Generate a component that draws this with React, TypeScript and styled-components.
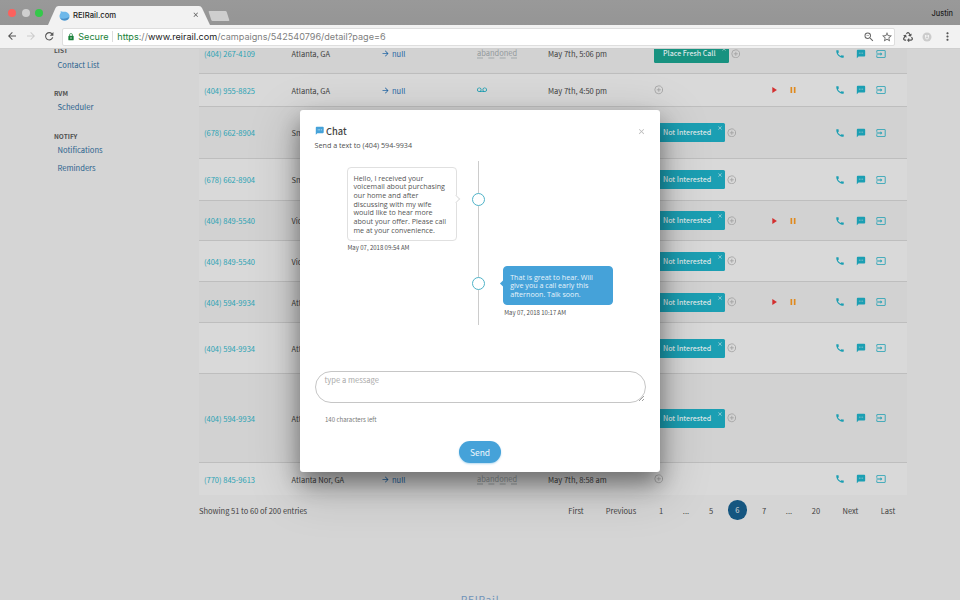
import React from "react";
import styled, { createGlobalStyle, css } from "styled-components";
import {
  MdCall, MdTextsms, MdInput, MdVoicemail, MdPlayArrow, MdPause, MdArrowForward,
  MdArrowBack, MdRefresh, MdLock, MdZoomOut, MdStarBorder, MdMoreVert, MdClose,
} from "react-icons/md";
import { FiPlusCircle } from "react-icons/fi";
import { FaRecycle } from "react-icons/fa";

const Global = createGlobalStyle`
  * { box-sizing: border-box; }
  body { margin: 0; overflow: hidden; }
  svg { display: block; flex: none; }
`;

const source = `"Noto Sans CJK SC", "Open Sans", sans-serif`;
const system = `Inter, Roboto, sans-serif`;

const Window = styled.div`
  position: relative;
  display: flex;
  flex-direction: column;
  width: 960px;
  height: 600px;
  overflow: hidden;
  background: #d5d5d5;
  font-family: ${source};
  font-size: 7.5px;
  line-height: 11px;
  color: #3f3f3f;
  white-space: nowrap;
`;

/* Browser chrome */
const TabBar = styled.header`
  display: flex;
  height: 25px;
  flex: none;
  padding-left: 8px;
  background: linear-gradient(#999, #959595);
  font-family: ${system};
`;
const Lights = styled.div`
  display: flex;
  gap: 5.5px;
  padding-top: 8.5px;
  width: 40px;
`;
const Light = styled.i<{ $color: string }>`
  width: 8px;
  height: 8px;
  border-radius: 50%;
  background: ${(p) => p.$color};
`;
const Tab = styled.div`
  position: relative;
  display: flex;
  align-items: center;
  width: 162px;
  height: 19px;
  margin-top: 6px;
  padding: 0 11px 1px 10.5px;
  color: #222;
  font-size: 7.7px;
  font-weight: 500;
`;
const TabShape = styled.svg`
  position: absolute;
  inset: 0;
`;
const TabTitle = styled.span`
  position: relative;
  flex: 1;
  margin-left: 3.5px;
`;
const TabIcon = styled.span`
  position: relative;
  color: #555;
  font-size: 8px;
`;
const NewTab = styled.div`
  width: 18px;
  height: 10px;
  margin: 11px 0 0 -0.5px;
  border-radius: 1px;
  background: #cecece;
  transform: skewX(18deg);
`;
const User = styled.span`
  margin: 8px 7px 0 auto;
  color: #222;
  font-size: 7.4px;
  font-weight: 500;
`;
const Toolbar = styled.div`
  display: flex;
  align-items: center;
  height: 24px;
  flex: none;
  padding: 0 6px;
  background: #f2f2f2;
  color: #555;
  font-family: ${system};
  border-bottom: 1px solid #cfcfcf;
`;
const NavButtons = styled.div`
  display: flex;
  gap: 6.5px;
  width: 56px;
`;
const Address = styled.div`
  display: flex;
  align-items: center;
  width: 837px;
  height: 18px;
  margin-right: 7px;
  padding: 0 4px;
  border: 1px solid #dedede;
  border-radius: 2px;
  background: #fff;
  color: #808080;
  font-size: 9.1px;
`;
const AddressIcons = styled.div`
  display: flex;
  align-items: center;
  gap: 6.5px;
  color: #666;
  margin-right: -3px;
`;
const Extensions = styled.div`
  display: flex;
  align-items: center;
  gap: 9px;
  margin-left: 1px;
`;
const Secure = styled.span`
  width: 35px;
  margin: 0 4px 0 3.5px;
  border-right: 1px solid #ddd;
  color: #188038;
`;
const Green = styled.span`color: #188038;`;
const Host = styled.span`color: #222;`;
const Url = styled.span`flex: 1;`;

/* Page */
const Page = styled.div`
  display: flex;
  flex: 1;
  min-height: 0;
  overflow: hidden;
`;
const Sidebar = styled.nav`
  width: 199px;
  padding-left: 54px;
  margin-top: -4px;
`;
const NavHead = styled.h4`
  height: 13.5px;
  margin: 0;
  font-size: 6.5px;
  font-weight: 700;
  color: #505050;
`;
const NavLink = styled.a`
  display: block;
  height: 18px;
  padding-left: 3.5px;
  color: #2b638e;
  font-size: 7.6px;
`;
const NavGroup = styled.section`
  padding-bottom: 11.3px;
`;
const Main = styled.main`
  width: 708px;
  margin-top: -15px;
`;
const Row = styled.div<{ $h: number; $odd: boolean; $last: boolean }>`
  display: grid;
  grid-template-columns: 87.5px 90.5px 95px 71px 105.5px 115px 67px 66px;
  align-items: center;
  height: ${(p) => p.$h}px;
  padding-left: 5px;
  background: ${(p) => (p.$odd ? "#d2d2d2" : "#d9d9d9")};
  border-bottom: ${(p) => (p.$last ? "0" : "1px solid #bebebe")};
`;
const Phone = styled.span`color: #2ba3b4;`;
const Cell = styled.div<{ $gap?: number }>`
  display: flex;
  align-items: center;
  gap: ${(p) => p.$gap ?? 0}px;
`;
const Forward = styled(Cell)`
  margin-left: -1px;
  color: #2467a5;
`;
const Status = styled.span`
  color: #93999c;
  line-height: 9px;
  border-bottom: 2px dashed #b9bdbe;
`;
const Tag = styled.span<{ $green?: boolean }>`
  display: flex;
  justify-content: space-between;
  width: ${(p) => (p.$green ? 75.5 : 71.5)}px;
  height: 19px;
  padding: 0 2px 0 9.5px;
  border-radius: 1.5px;
  background: ${(p) => (p.$green ? "#189280" : "#1b9fb3")};
  color: #dce7e8;
  font-size: 7.05px;
  font-weight: 500;
  line-height: 19px;
  svg { margin-top: 2px; }
`;
const Teal = styled(Cell)`color: #1b9fb3;`;
const Actions = styled(Teal)`margin-left: -0.5px;`;
const Footer = styled.div`
  display: flex;
  align-items: center;
  height: 30px;
`;
const Pages = styled.div`
  display: flex;
  align-items: center;
  margin-left: auto;
`;
const PageLink = styled.span<{ $w: number; $active?: boolean }>`
  width: ${(p) => p.$w}px;
  text-align: center;
  ${(p) => p.$active && css`
    height: 19.5px;
    margin-right: 3.5px;
    line-height: 19.5px;
    border-radius: 50%;
    background: #155680;
    color: #d5d5d5;
  `}
`;
const Brand = styled.div`
  width: 562px;
  margin-top: 68px;
  color: #6f93b9;
  font-size: 10.3px;
  letter-spacing: 0.7px;
  line-height: 14px;
  text-align: center;
`;

/* Dialog */
const Dialog = styled.section`
  position: absolute;
  top: 109.5px;
  left: 300px;
  width: 360px;
  height: 362px;
  padding: 14.5px 14.5px 0;
  border-radius: 3px;
  background: #fff;
  box-shadow: 0 12px 22px rgba(0, 0, 0, 0.4), 0 14px 48px 6px rgba(0, 0, 0, 0.17);
  color: #505050;
`;
const Title = styled.h2`
  display: flex;
  align-items: center;
  gap: 2px;
  height: 14px;
  margin: 0;
  font-size: 9.3px;
  font-weight: 500;
  color: #444;
`;
const TitleText = styled.span`flex: 1;`;
const Blue = styled.span`color: #45a2d9;`;
const Faint = styled.span`color: #bbb;`;
const Sub = styled.p`
  margin: 2px 0 10px;
  font-family: "Open Sans", sans-serif;
  font-size: 7.2px;
`;
const Timeline = styled.div`
  display: grid;
  grid-template-columns: 142px 44px 1fr;
  height: 164px;
`;
const Side = styled.div<{ $top: number; $left: number }>`
  padding: ${(p) => p.$top}px 0 0 ${(p) => p.$left}px;
`;
const Bubble = styled.div<{ $own?: boolean }>`
  position: relative;
  width: 110px;
  height: ${(p) => (p.$own ? 39 : 74)}px;
  padding: ${(p) => (p.$own ? 5.5 : 6)}px 6px;
  border: 1px solid ${(p) => (p.$own ? "#45a2d9" : "#e0e0e0")};
  border-radius: 4px;
  background: ${(p) => (p.$own ? "#45a2d9" : "#fff")};
  color: ${(p) => (p.$own ? "#e8f4fb" : "#555")};
  font-family: "Open Sans", sans-serif;
  font-size: 7.15px;
  line-height: 8.7px;
  white-space: pre;
  &::after {
    content: "";
    position: absolute;
    width: 5px;
    height: 5px;
    background: inherit;
    transform: rotate(45deg);
    ${(p) => p.$own
      ? css`left: -3px; top: 14px;`
      : css`right: -3.5px; top: 28px; border: solid #e0e0e0; border-width: 1px 1px 0 0;`}
  }
`;
const Stamp = styled.div`
  margin-top: 1.5px;
  padding-left: 1px;
  font-size: 6px;
`;
const Rail = styled.div`
  display: flex;
  flex-direction: column;
  align-items: center;
  padding-top: 32px;
  gap: 71px;
  background: linear-gradient(#ccc, #ccc) 21.5px 0 / 1px 100% no-repeat;
`;
const Dot = styled.i`
  width: 13px;
  height: 13px;
  border: 1px solid #4fb3c8;
  border-radius: 50%;
  background: #fff;
`;
const Input = styled.div`
  display: flex;
  justify-content: space-between;
  align-items: flex-end;
  height: 32px;
  margin-top: 46px;
  padding-left: 9px;
  border: 1px solid #c6c6c6;
  border-radius: 16px;
  color: #aaa;
  font-size: 7.6px;
`;
const Placeholder = styled.span`
  align-self: flex-start;
  margin-top: 2px;
`;
const Counter = styled.p`
  margin: 11px 0 16px 10.5px;
  font-size: 6.05px;
  color: #777;
`;
const Send = styled.button`
  display: block;
  width: 42px;
  height: 22px;
  margin: 0 auto;
  padding: 0;
  border: 0;
  border-radius: 11px;
  background: #45a2d9;
  box-shadow: 0 1px 2px rgba(69, 162, 217, 0.4);
  color: #f0f8fc;
  font: 8.5px/21px ${source};
`;

type Entry = { phone: string; city: string; h: number; time?: string; status?: "abandoned" | "voicemail"; tag?: "fresh" | "no"; play?: boolean };
const entries: Entry[] = [
  { phone: "(404) 267-4109", city: "Atlanta, GA", h: 40, time: "May 7th, 5:06 pm", status: "abandoned", tag: "fresh" },
  { phone: "(404) 955-8825", city: "Atlanta, GA", h: 33, time: "May 7th, 4:50 pm", status: "voicemail", play: true },
  { phone: "(678) 662-8904", city: "Smyrna, GA", h: 52, tag: "no" },
  { phone: "(678) 662-8904", city: "Smyrna, GA", h: 42, tag: "no" },
  { phone: "(404) 849-5540", city: "Vidalia, GA", h: 40, tag: "no", play: true },
  { phone: "(404) 849-5540", city: "Vidalia, GA", h: 41, tag: "no" },
  { phone: "(404) 594-9934", city: "Atlanta, GA", h: 41, tag: "no", play: true },
  { phone: "(404) 594-9934", city: "Atlanta, GA", h: 51, tag: "no" },
  { phone: "(404) 594-9934", city: "Atlanta, GA", h: 89, tag: "no" },
  { phone: "(770) 845-9613", city: "Atlanta Nor, GA", h: 32, time: "May 7th, 8:58 am", status: "abandoned" },
];

const nav = [
  { head: "LIST", links: ["Contact List"] },
  { head: "RVM", links: ["Scheduler"] },
  { head: "NOTIFY", links: ["Notifications", "Reminders"] },
];

const pages: [string, number][] = [
  ["First", 44], ["Previous", 46], ["1", 34], ["...", 16], ["5", 34], ["6", 18.5], ["7", 28], ["...", 22], ["20", 32], ["Next", 37], ["Last", 38],
];

function EntryRow({ e, odd, last }: { e: Entry; odd: boolean; last: boolean }) {
  return (
    <Row $h={e.h} $odd={odd} $last={last}>
      <Phone>{e.phone}</Phone>
      <span>{e.city}</span>
      <Forward $gap={2}>{e.time && <><MdArrowForward size={9} /> null</>}</Forward>
      <Teal>
        {e.status === "abandoned" && <Status>abandoned</Status>}
        {e.status === "voicemail" && <MdVoicemail size={10} />}
      </Teal>
      <span>{e.time}</span>
      <Cell $gap={1.5}>
        {e.tag && <Tag $green={e.tag === "fresh"}>{e.tag === "fresh" ? "Place Fresh Call" : "Not Interested"}<MdClose size={6} /></Tag>}
        <FiPlusCircle size={9.6} color="#a0a0a0" strokeWidth={2} />
      </Cell>
      <Cell $gap={9.5}>{e.play && <><MdPlayArrow size={10} color="#d32f2f" /><MdPause size={10} color="#e08a1e" /></>}</Cell>
      <Actions $gap={10.5}><MdCall size={10} /><MdTextsms size={10} /><MdInput size={10} /></Actions>
    </Row>
  );
}

export default function App() {
  return (
    <Window>
      <Global />
      <TabBar>
        <Lights><Light $color="#fc615d" /><Light $color="#cfcfcf" /><Light $color="#34c84a" /></Lights>
        <Tab>
          <TabShape width="162" height="19"><path d="M0 19 L7.5 2 Q8.5 0 10.5 0 H151 Q153 0 154 2 L162 19Z" fill="#f2f2f2" /></TabShape>
          <TabIcon>
            <svg width="11" height="11" viewBox="0 0 11 11">
              <path d="M1.5 1 C3 2 4 1.5 5.5 1.7 C8 1.7 10.6 3.5 10.6 6.3 C10.6 9 8.5 10.6 5.7 10.6 C3 10.6 .6 9 .5 6.2 C.5 4 2.5 3 1.5 1Z" fill="#6db8ea" />
              <path d="M1 8 Q5 10 10.3 7 Q9 10.6 5.7 10.6 Q2.5 10.6 1 8Z" fill="#4a8fc6" />
            </svg>
          </TabIcon>
          <TabTitle>REIRail.com</TabTitle>
          <TabIcon><MdClose size={7.5} /></TabIcon>
        </Tab>
        <NewTab />
        <User>Justin</User>
      </TabBar>
      <Toolbar>
        <NavButtons><MdArrowBack size={12} /><MdArrowForward size={12} color="#ccc" /><MdRefresh size={12.5} /></NavButtons>
        <Address>
          <MdLock size={8} color="#188038" />
          <Secure>Secure</Secure>
          <Url><Green>https</Green>://<Host>www.reirail.com</Host>/campaigns/542540796/detail?page=6</Url>
          <AddressIcons><MdZoomOut size={12} /><MdStarBorder size={12} /></AddressIcons>
        </Address>
        <Extensions>
          <FaRecycle size={10} />
          <svg width="10" height="10" viewBox="0 0 10 10"><circle cx="5" cy="5" r="4.5" fill="#ccc" /><path d="M3.5 3V5.5a1.5 1.5 0 0 0 3 0V3M5 3v2" stroke="#f2f2f2" fill="none" /></svg>
          <MdMoreVert size={13} />
        </Extensions>
      </Toolbar>
      <Page>
        <Sidebar>
          {nav.map((g) => (
            <NavGroup key={g.head}>
              <NavHead>{g.head}</NavHead>
              {g.links.map((l) => <NavLink key={l}>{l}</NavLink>)}
            </NavGroup>
          ))}
        </Sidebar>
        <Main>
          {entries.map((e, i) => <EntryRow key={i} e={e} odd={i % 2 === 0} last={i === entries.length - 1} />)}
          <Footer>
            <span>Showing 51 to 60 of 200 entries</span>
            <Pages>{pages.map(([t, w], i) => <PageLink key={i} $w={w} $active={t === "6"}>{t}</PageLink>)}</Pages>
          </Footer>
          <Brand>REIRail</Brand>
        </Main>
      </Page>
      <Dialog>
        <Title>
          <Blue><MdTextsms size={9.5} /></Blue>
          <TitleText>Chat</TitleText>
          <Faint><MdClose size={9} /></Faint>
        </Title>
        <Sub>Send a text to (404) 594-9934</Sub>
        <Timeline>
          <Side $top={5.5} $left={32}>
            <Bubble>{"Hello, I received your\nvoicemail about purchasing\nour home and after\ndiscussing with my wife\nwould like to hear more\nabout your offer. Please call\nme at your convenience."}</Bubble>
            <Stamp>May 07, 2018 09:54 AM</Stamp>
          </Side>
          <Rail><Dot /><Dot /></Rail>
          <Side $top={105} $left={2.7}>
            <Bubble $own>{"That is great to hear. Will\ngive you a call early this\nafternoon. Talk soon."}</Bubble>
            <Stamp>May 07, 2018 10:17 AM</Stamp>
          </Side>
        </Timeline>
        <Input>
          <Placeholder>type a message</Placeholder>
          <svg width="7" height="7" viewBox="0 0 7 7"><path d="M1 6 6 1M4 6 6 4" stroke="#777" strokeWidth=".7" /></svg>
        </Input>
        <Counter>140 characters left</Counter>
        <Send>Send</Send>
      </Dialog>
    </Window>
  );
}
